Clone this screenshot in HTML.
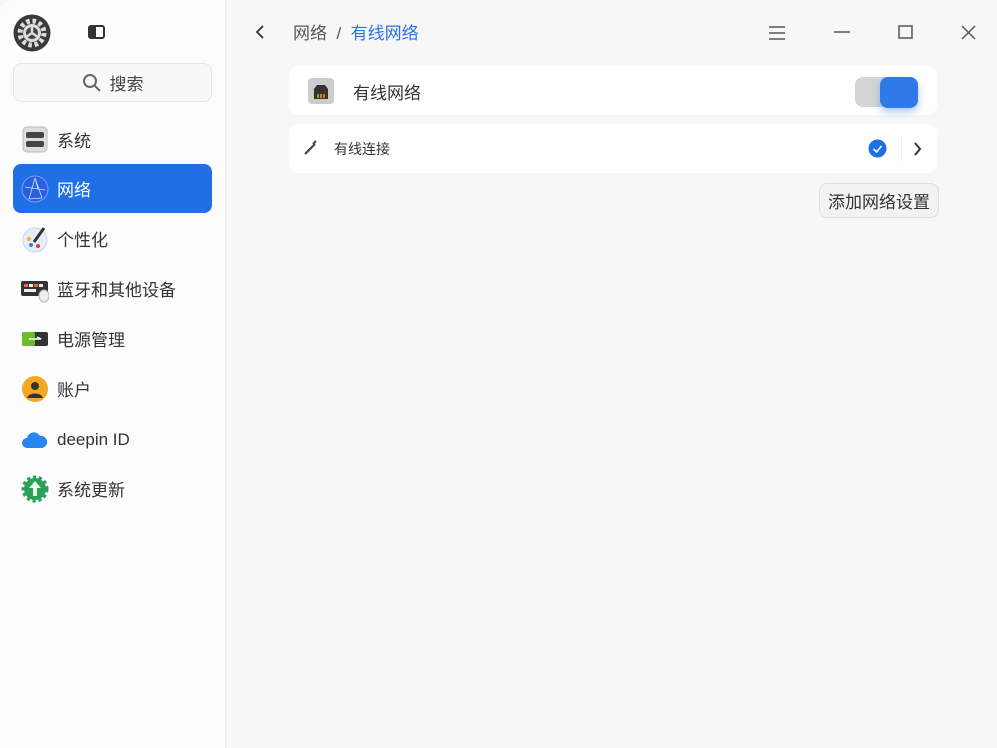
<!DOCTYPE html>
<html><head><meta charset="utf-8"><style>
*{margin:0;padding:0;box-sizing:border-box}
body{width:997px;height:748px;overflow:hidden;background:#f7f7f7;font-family:"Liberation Sans","Noto Sans CJK SC",sans-serif;color:#333;position:relative}
.side{position:absolute;left:0;top:0;width:226px;height:748px;background:#fcfcfc;border-right:1px solid #ececec;border-radius:14px 0 0 0}
.search{position:absolute;left:13px;top:63px;width:199px;height:39px;border:1px solid #e6e6e6;border-radius:8px;background:#f8f8f8;font-size:17px;color:#444;display:flex;align-items:center;justify-content:center;gap:8px}
.item{position:absolute;left:13px;width:199px;height:49px;border-radius:8px;display:flex;align-items:center;padding-left:8px;font-size:17px;color:#333}
.item .ic{width:28px;height:28px;margin-right:8px;flex:none}
.sel{background:#1f6fe5;color:#fff}
.card{position:absolute;left:289px;width:648px;background:#fff;border-radius:10px}
.abs{position:absolute}
</style></head><body>
<div class="side">
  <svg class="abs" style="left:13px;top:14px" width="38" height="38" viewBox="0 0 38 38"><circle cx="19" cy="19" r="18.5" fill="#3a3a3a"/><circle cx="19" cy="19" r="12" fill="none" stroke="#ddd" stroke-width="5" stroke-dasharray="3.5 2.8"/><circle cx="19" cy="19" r="9" fill="#ddd"/><circle cx="19" cy="19" r="6" fill="#444"/><path d="M19 19V12M19 19l6 4M19 19l-6 4" stroke="#ddd" stroke-width="2.5"/></svg>
  <div class="abs" style="left:88px;top:25px;width:17px;height:14px;border:2px solid #333;border-radius:3px;background:linear-gradient(90deg,#333 45%,#fff 45%)"></div>
  <div class="search"><svg width="20" height="20" viewBox="0 0 20 20"><circle cx="8" cy="8" r="6" fill="none" stroke="#666" stroke-width="2"/><path d="M12.5 12.5L18 18" stroke="#666" stroke-width="2"/></svg>搜索</div>
  <div class="item" style="top:115px"><svg class="ic" viewBox="0 0 28 28"><rect x="2" y="1" width="24" height="25" rx="4" fill="#ddd" stroke="#bbb"/><rect x="5" y="6" width="18" height="6" rx="2" fill="#444"/><rect x="5" y="15" width="18" height="6" rx="2" fill="#444"/></svg>系统</div>
  <div class="item sel" style="top:164px"><svg class="ic" viewBox="0 0 28 28"><circle cx="14" cy="14" r="13" fill="#2a5fe0"/><circle cx="14" cy="14" r="13" fill="none" stroke="#6fa8ff"/><path d="M14 3L8 24M14 3l7 20M4 12l20 3M8 24l13-1M14 3l3 11" stroke="#cfe0ff" stroke-width=".8" fill="none"/></svg>网络</div>
  <div class="item" style="top:214px"><svg class="ic" viewBox="0 0 28 28"><circle cx="14" cy="15" r="12" fill="#e6edf7" stroke="#c9d5e6"/><circle cx="8" cy="14" r="2" fill="#f4b12c"/><circle cx="10" cy="20" r="2" fill="#3a7be0"/><circle cx="17" cy="21" r="2" fill="#e0334a"/><path d="M13 17L23 3" stroke="#333" stroke-width="3"/></svg>个性化</div>
  <div class="item" style="top:264px"><svg class="ic" viewBox="0 0 28 28"><rect x="0" y="6" width="27" height="15" rx="2" fill="#333"/><rect x="3" y="9" width="4" height="3" fill="#e86a3a"/><rect x="8" y="9" width="4" height="3" fill="#eee"/><rect x="13" y="9" width="4" height="3" fill="#e86a3a"/><rect x="18" y="9" width="4" height="3" fill="#eee"/><rect x="3" y="14" width="12" height="3" fill="#eee"/><ellipse cx="23" cy="21" rx="5" ry="6" fill="#eee" stroke="#bbb"/></svg>蓝牙和其他设备</div>
  <div class="item" style="top:314px"><svg class="ic" viewBox="0 0 28 28"><rect x="1" y="7" width="26" height="14" rx="2" fill="#333"/><rect x="1" y="7" width="13" height="14" rx="2" fill="#6bbd2a"/><path d="M8 14h12l-4-2" stroke="#fff" stroke-width="1.5" fill="none"/></svg>电源管理</div>
  <div class="item" style="top:364px"><svg class="ic" viewBox="0 0 28 28"><circle cx="14" cy="14" r="13" fill="#f5a623"/><circle cx="14" cy="11" r="4" fill="#333"/><path d="M6 23c2-6 14-6 16 0z" fill="#333"/></svg>账户</div>
  <div class="item" style="top:415px"><svg class="ic" viewBox="0 0 28 28"><path d="M6 22a5 5 0 010-10 7 7 0 0113-2 6 6 0 012 12z" fill="#2a86ee"/></svg>deepin ID</div>
  <div class="item" style="top:464px"><svg class="ic" viewBox="0 0 28 28"><circle cx="14" cy="14" r="11" fill="#2aa05a" stroke="#2aa05a" stroke-width="5" stroke-dasharray="3 2.5"/><path d="M14 6l-6 7h4v8h4v-8h4z" fill="#e8ffe8"/></svg>系统更新</div>
</div>
<svg class="abs" style="left:254px;top:24px" width="12" height="16" viewBox="0 0 12 16"><path d="M9 2L3 8l6 6" stroke="#444" stroke-width="2" fill="none"/></svg>
<div class="abs" style="left:293px;top:19px;font-size:17px;color:#555">网络&nbsp;&nbsp;/&nbsp;&nbsp;<span style="color:#2a72e6">有线网络</span></div>
<svg class="abs" style="left:768px;top:24px" width="18" height="18"><path d="M1 3h16M1 9h16M1 15h16" stroke="#555" stroke-width="1.5"/></svg>
<svg class="abs" style="left:833px;top:24px" width="18" height="18"><path d="M1 8h16" stroke="#555" stroke-width="1.5"/></svg>
<svg class="abs" style="left:897px;top:24px" width="18" height="18"><rect x="2" y="2" width="13" height="12" fill="none" stroke="#555" stroke-width="1.5"/></svg>
<svg class="abs" style="left:960px;top:24px" width="18" height="18"><path d="M2 2l13 13M15 2L2 15" stroke="#555" stroke-width="1.5"/></svg>
<div class="card" style="top:66px;height:49px">
  <svg class="abs" style="left:18px;top:11px" width="28" height="28" viewBox="0 0 28 28"><rect x="1" y="1" width="26" height="26" rx="4" fill="#ccc"/><path d="M7 22V12l3-4h8l3 4v10z" fill="#333"/><path d="M11 17v4M14 17v4M17 17v4" stroke="#f0a800" stroke-width="1.5"/></svg>
  <div class="abs" style="left:64px;top:13px;font-size:17px;color:#333">有线网络</div>
  <div class="abs" style="left:566px;top:11px;width:63px;height:30px;border-radius:8px;background:#d4d4d4"></div>
  <div class="abs" style="left:591px;top:11px;width:38px;height:31px;border-radius:8px;background:#2f7ae8;box-shadow:0 4px 8px rgba(47,122,232,.4)"></div>
</div>
<div class="card" style="top:124px;height:49px">
  <svg class="abs" style="left:14px;top:16px" width="16" height="16"><path d="M2 14l5-5M7 9l5-5M10 4l3-3" stroke="#444" stroke-width="2.2"/></svg>
  <div class="abs" style="left:45px;top:15px;font-size:14px;color:#333">有线连接</div>
  <svg class="abs" style="left:579px;top:15px" width="19" height="19"><circle cx="9.5" cy="9.5" r="9" fill="#1f6fe5"/><path d="M5.5 10l3 3 5-6" stroke="#fff" stroke-width="1.6" fill="none"/></svg>
  <div class="abs" style="left:612px;top:12px;width:1px;height:25px;background:#eee"></div>
  <svg class="abs" style="left:624px;top:17px" width="10" height="16"><path d="M2 2l5 6-5 6" stroke="#333" stroke-width="2" fill="none"/></svg>
</div>
<div class="abs" style="left:819px;top:183px;width:120px;height:35px;border:1px solid #e0e0e0;border-radius:8px;background:#f2f2f2;font-size:17px;color:#333;display:flex;align-items:center;justify-content:center">添加网络设置</div>
</body></html>
